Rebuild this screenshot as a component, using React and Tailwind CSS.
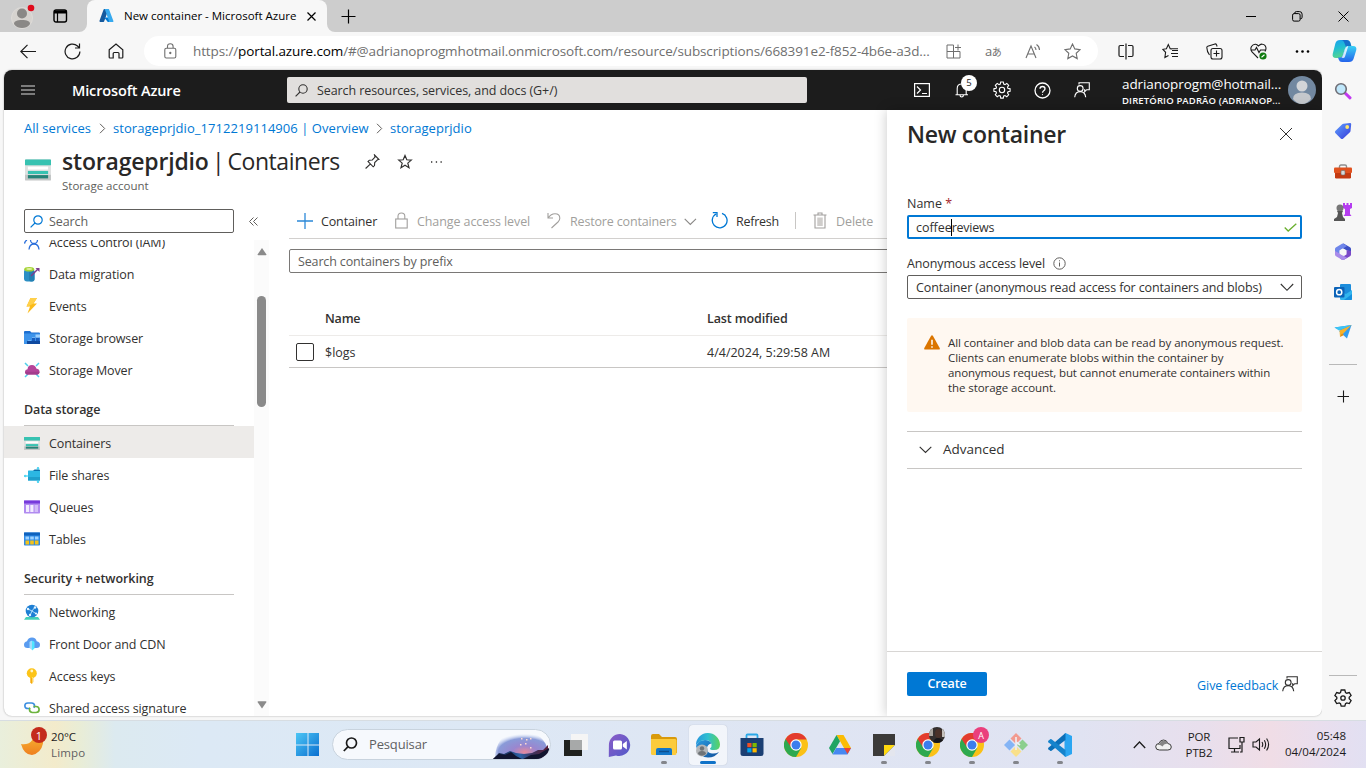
import React from "react";

/* Line icon: stroked with the current text colour. */
function Line({ w = 16, h = 16, sw = 1, vb, className = "", children }) {
  return (
    <svg width={w} height={h} viewBox={vb || `0 0 ${w} ${h}`} fill="none" stroke="currentColor" strokeWidth={sw} className={`shrink-0 ${className}`}>
      {children}
    </svg>
  );
}

/* Filled, multi-colour icon. */
function Art({ w = 16, h = 16, vb, className = "", children }) {
  return (
    <svg width={w} height={h} viewBox={vb || `0 0 ${w} ${h}`} className={`shrink-0 ${className}`}>
      {children}
    </svg>
  );
}

function Feedback({ className = "" }) {
  return (
    <Line w={16} h={16} sw={1.1} className={className}>
      <path d="M5 2.500V.7h10.300v7h-2.600l-2 2V7.700H10" />
      <circle cx="6.200" cy="6.500" r="2.900" />
      <path d="M.7 15.300c.3-3.400 2.400-5.700 5.500-5.700s5.200 2.300 5.500 5.700" />
    </Line>
  );
}

/* ---------- Browser chrome ---------- */

function TabStrip() {
  return (
    <div className="flex h-8 shrink-0 items-center bg-[#cdcdcd] text-black">
      <Art w={24} h={28} className="ml-[11px]">
        <circle cx="11" cy="16" r="10.500" fill="#d6d3cf" stroke="#dedbd8" />
        <circle cx="11" cy="11.500" r="5" fill="#8a8886" />
        <path d="M3 22c0-3 3-4 8-4s8 1 8 4c-2 3-5 4-8 4s-6-1-8-4z" fill="#8a8886" />
        <circle cx="20" cy="6" r="3.300" fill="#e00b1c" />
      </Art>
      <Line w={15} h={14} sw={1.4} className="ml-[18px]">
        <rect x="1" y="1" width="12.500" height="12" rx="2" />
        <path d="M1 3h12.500" strokeWidth="3" />
        <path d="M4.500 4v9" strokeWidth="1.200" />
      </Line>
      <Art w={8} h={8} className="ml-[11px] self-end"><path d="M0 8a8 8 0 0 0 8-8v8z" fill="#f7f7f7" /></Art>
      <div className="flex h-8 w-[240px] shrink-0 items-center rounded-t-lg bg-[#f7f7f7]">
        <Art w={16} h={16} className="ml-3">
          <path d="M5.300 1h4.300L5.200 13.300a.8.8 0 0 1-.8.600H1.200a.8.8 0 0 1-.7-1.100L4.600 1.600a.8.8 0 0 1 .7-.6z" fill="#155a9e" />
          <path d="M10.800 9.500H5.200l3.600 4.400h3.100z" fill="#0078d4" />
          <path d="M9.300 1H5.200a.8.8 0 0 1 .7.500l4.100 11.600a.8.8 0 0 1-.8.900h4.500a.8.8 0 0 0 .7-1.100L10.100 1.500a.8.8 0 0 0-.8-.5z" fill="#36a9ee" />
        </Art>
        <span className="ml-[9px] w-[180px] text-[11.5px] tracking-[0px]">New container - Microsoft Azure</span>
        <Line w={9} h={9} sw={1.2} className="ml-[3px]"><path d="M.5.5l8 8M8.500.5l-8 8" /></Line>
      </div>
      <Art w={8} h={8} className="self-end"><path d="M0 0a8 8 0 0 0 8 8H0z" fill="#f7f7f7" /></Art>
      <Line w={15} h={15} sw={1.2} className="ml-[6px]"><path d="M7.500.5v14M.5 7.500h14" /></Line>
      <Line w={10} h={10} className="ml-auto"><path d="M0 5.500h10" /></Line>
      <Line w={11} h={11} className="ml-9"><rect x=".6" y="2.600" width="7.500" height="7.500" rx="1.500" /><path d="M2.600 2.500Q2.600.6 4.500.6h3q2.600 0 2.600 2.600v3q0 1.700-1.800 1.700" /></Line>
      <Line w={11} h={11} className="ml-[35px] mr-[17px]"><path d="M.5.5l10 10M10.500.5l-10 10" /></Line>
    </div>
  );
}

function Toolbar() {
  return (
    <div className="flex h-[38px] shrink-0 items-center bg-[#f7f7f7] text-[#1b1b1b]">
      <Line w={17} h={15} sw={1.2} className="ml-5"><path d="M16 7.500H1M7.500.8L.8 7.500l6.700 6.700" /></Line>
      <Line w={17} h={17} sw={1.2} className="ml-[27px]"><path d="M15.900 8.500A7.400 7.400 0 1 1 13.500 3l2 2M15.500.5V5H11" /></Line>
      <Line w={16} h={16} sw={1.2} className="ml-[27px]"><path d="M1.200 6.700L8 1l6.800 5.700v7.500q0 .8-.8.800h-3v-4.500q0-1-1-1H6.200q-1 0-1 1V15H2q-.8 0-.8-.8z" /></Line>
      <div className="ml-5 flex h-[30px] w-[954px] shrink-0 items-center rounded-full bg-white text-[#6f6f6f]">
        <Line w={13} h={16} sw={1.1} className="ml-5"><rect x=".8" y="5.200" width="11" height="9.800" rx="1.500" /><path d="M3.500 5V3.500Q3.500.8 6.300.8T9.100 3.500V5" /><circle cx="6.300" cy="10" r=".6" fill="currentColor" /></Line>
        <span className="ml-4 w-[745px] shrink-0 whitespace-nowrap text-[13.5px] leading-5 tracking-[-0.12px]">
          https://<span className="text-black">portal.azure.com</span>/#@adrianoprogmhotmail.onmicrosoft.com/resource/subscriptions/668391e2-f852-4b6e-a3d...
        </span>
        <Line w={16} h={15} className="ml-[8px]"><path d="M7.500 1H1v13h13V7.500H1M7.500 1v13M12 .5v6M9 3.500h6" /></Line>
        <span className="ml-[23px] w-[20px] shrink-0 whitespace-nowrap font-['Open_Sans','Noto_Sans_CJK_JP',sans-serif] text-[13px] leading-5 tracking-[-0.5px]">a<span className="text-[10px]">あ</span></span>
        <Line w={17} h={16} sw={1.1} className="ml-[20px]"><path d="M1 15L6 3l5 12M2.700 11h6.600M9.500 4q1.500 1 1.500 3M11.500 1.500q3 2 3 5.500" /></Line>
        <Line w={17} h={17} sw={1.1} className="ml-[22px]"><path d="M8.500 1l2.300 4.900 5.300.7-3.900 3.700 1 5.300-4.700-2.600-4.700 2.600 1-5.300L.9 6.600l5.300-.7z" /></Line>
      </div>
      <Line w={16} h={17} sw={1.2} className="ml-[20px]"><path d="M6 2.500H2.200Q1 2.500 1 3.700v8.600q0 1.200 1.200 1.200H6M10 2.500h3.800q1.200 0 1.200 1.200v8.600q0 1.200-1.200 1.200H10M8 .5v16" /></Line>
      <Line w={17} h={16} sw={1.1} className="ml-[28px]"><path d="M10 6L8.200 5.700 6.300 1.500 4.400 5.700.8 6.300l2.800 3-.7 5.200 3.600-2.100M10 7.500h6M9 10.500h7M10 13.500h6M8.200 5.700h7.800" /></Line>
      <Line w={17} h={17} sw={1.1} className="ml-[27px]"><rect x="5" y="5.500" width="11" height="10.500" rx="2" /><path d="M10.500 7.500v6M7.500 10.500h6M3.500 12Q1 9 .8 4.500q0-1 .9-1.300L9 1q1-.3 1.500.7l.6 1.800" /></Line>
      <Line w={18} h={17} sw={1.1} className="ml-[27px]"><path d="M8 15L2 9Q0 6 1.500 3.500 3 1 5.500 1.200 7 1.400 8.500 3q2-2.300 4-1.800Q15.500 1.500 16 5q0 2-1 3.500M.5 7H5l1.500-2.500L9 9.500 10.500 7H16" /><circle cx="13" cy="13" r="3.600" fill="#107c10" stroke="none" /><path d="M11.500 14.200l3-2.400" stroke="#fff" /></Line>
      <Art w={15} h={5} className="ml-[27px]"><circle cx="2" cy="2.500" r="1.300" /><circle cx="7.500" cy="2.500" r="1.300" /><circle cx="13" cy="2.500" r="1.300" /></Art>
      <Art w={25} h={24} className="ml-[22px]">
        <defs>
          <linearGradient id="cp1" x1="0" y1="0" x2=".3" y2="1"><stop offset="0" stopColor="#1a9ff1" /><stop offset=".5" stopColor="#22bfd0" /><stop offset="1" stopColor="#58d68d" /></linearGradient>
          <linearGradient id="cp2" x1="0" y1="0" x2="0" y2="1"><stop offset="0" stopColor="#39d0f5" /><stop offset="1" stopColor="#2463eb" /></linearGradient>
        </defs>
        <path d="M8 1h7q2.500 0 3.300 2.500l1 3.500h-3q-2.500 0-3.300 2.500L11 16q-.8 3-3.500 3H4q-4 0-3.300-4L3.500 4Q4.500 1 8 1z" fill="url(#cp1)" />
        <path d="M17 23h-7q-2.500 0-3.300-2.500L6 18.500h1.500q2.700 0 3.500-3l2-6Q13.800 7 16.300 7H21q4 0 3.300 4L21.500 20q-1 3-4.500 3z" fill="url(#cp2)" />
        <path d="M9 1h6q2.500 0 3.300 2.500l1 3.500h-3q-1.500 0-2.300 1L12 3Q11.200 1 9 1z" fill="#1458c6" opacity=".75" />
        <path d="M9.500 18.500q1.200-.8 1.700-3l2-6Q14 7 16.300 7L13 17.500Q12.500 19 11 19z" fill="#fff" opacity=".8" />
      </Art>
    </div>
  );
}

function EdgeSidebar() {
  return (
    <div className="flex w-11 shrink-0 flex-col items-center bg-[#f7f7f7] pr-[2px] text-[#1b1b1b]">
      <Art w={18} h={18} className="mt-3"><path d="M10.500 10.500l5.500 5.300" stroke="#c239f0" strokeWidth="3" strokeLinecap="round" /><circle cx="7" cy="7" r="5.300" fill="#bfe7fb" stroke="#6e6e76" strokeWidth="1.600" /></Art>
      <Art w={18} h={18} className="mt-[22px]"><defs><linearGradient id="tg" x1="0" y1="0" x2="1" y2="1"><stop offset="0" stopColor="#5fa2ff" /><stop offset="1" stopColor="#3638d8" /></linearGradient></defs><path d="M9.500 1.800L16 1q1.300 0 1.200 1.200L16.500 9q-.1.700-.6 1.200L9 16.700q-1 .8-2 0L1.300 11q-.8-1 0-2L8 2.400q.6-.5 1.500-.6z" fill="url(#tg)" /><circle cx="13.200" cy="5" r="1.900" fill="#ffe66b" /></Art>
      <Art w={18} h={16} className="mt-[24px]"><path d="M5.500 4V2.500Q5.500 1 7 1h4q1.500 0 1.500 1.500V4" fill="none" stroke="#8d8d8d" strokeWidth="1.400" /><rect x="1" y="7" width="16" height="7.500" rx="1.200" fill="#c33a12" /><rect x="0" y="3.500" width="18" height="5.500" rx="1" fill="#e0511e" /><rect x="7" y="6.500" width="4" height="4.500" rx="1" fill="#d5d8da" stroke="#6b6b6b" strokeWidth=".6" /></Art>
      <Art w={20} h={20} className="mt-[22px]"><path d="M10 1h2v2h1.500V1h2v2H17V1h2v5l-2 1v5l1.500 2H10.500L12 12V7l-2-1z" fill="#b53cf0" /><circle cx="7" cy="6" r="3.500" fill="#777" /><path d="M4 9h6l-1 2 1 4 2 2v2H1v-2l3-2 1-4z" fill="#555" /></Art>
      <Art w={18} h={18} className="mt-[21px]">
        <path d="M9 .5q.5 0 1 .3l6 3.500q1 .6 1 1.700v3L12 7 9 5.500z" fill="#3c4fc4" />
        <path d="M9 .5L13 3 9 5.500 5.500 7.500v4L1.800 11Q1 10.500 1 10V6Q1 5 1.800 4.500L8 .8q.5-.3 1-.3z" fill="#6f86ea" />
        <path d="M17 8v3.500q0 1-1 1.700l-6 3.500q-1 .6-2 0l-2-1.200 6.500-4V7z" fill="#7a48c8" />
        <path d="M1 8v3.500q0 1 1 1.700l6 3.500q1 .5 2 0l3-2-4-2.200-3.500-2z" fill="#a98bea" />
        <path d="M9 5.500l3.200 1.800v3.500L9 12.600l-3.200-1.800V7.300z" fill="#f7f7f7" />
      </Art>
      <Art w={18} h={18} className="mt-[22px]"><rect x="6" y="1" width="11" height="12" rx="1" fill="#1c8ddc" /><path d="M6 8l6 3 6-4v9q0 1-1 1H7q-1 0-1-1z" fill="#32b5ee" /><path d="M10 17l8-6v5q0 1-1 1z" fill="#1490df" /><rect x="0" y="4" width="10.500" height="10.500" rx="1" fill="#0b63b8" /><circle cx="5.200" cy="9.200" r="2.600" fill="none" stroke="#fff" strokeWidth="1.500" /></Art>
      <Art w={18} h={16} className="mt-[23px]"><path d="M.5 3.500L17.500 1l-6 8z" fill="#2e95e8" /><path d="M17.500 1L13 14.500 5 7z" fill="#2f9cf1" /><path d="M17.500 1L5.500 6.500 6 13z" fill="#f6b12b" /><path d="M.5 3.500L17.500 1 5 6.500z" fill="#3cc5f5" /><path d="M6 13l2-3.500L10 11z" fill="#d88a14" /></Art>
      <div className="mt-[24px] h-px w-7 bg-[#b9b9b9]" />
      <Line w={12} h={13} sw={1.1} className="mt-[25px]"><path d="M6.500.5v12M.5 6.500h12" /></Line>
      <div className="mt-auto h-px w-7 bg-[#b9b9b9]" />
      <Line w={18} h={18} sw={1.3} className="mt-[13px] mb-[13px]"><path d="M7.200 1h3.600l.7 2.500 1.300.7 2.500-.7 1.800 3-1.900 1.800v1.500l1.900 1.800-1.800 3-2.500-.7-1.300.8-.7 2.400H7.200l-.7-2.400-1.300-.8-2.500.7-1.800-3 1.900-1.800V8.200L.9 6.500l1.800-3 2.500.7 1.300-.7z" /><circle cx="9" cy="9" r="2.200" /></Line>
    </div>
  );
}

/* ---------- Azure portal ---------- */

function PortalHeader() {
  return (
    <div className="flex h-10 shrink-0 items-center bg-[#1c1c1c] text-white">
      <Art w={14} h={10} className="ml-[17px]"><path d="M0 1h14M0 5h14M0 9h14" stroke="#9b9b9b" strokeWidth="1.500" /></Art>
      <span className="ml-[37px] w-[215px] shrink-0 pt-px text-[14.5px] font-semibold tracking-[-0.14px]">Microsoft Azure</span>
      <div className="flex h-[26px] w-[520px] shrink-0 items-center rounded-[2px] bg-[#e1dfdd] text-[#323130]">
        <Line w={13} h={13} sw={1.1} className="ml-2"><circle cx="8" cy="5" r="4.200" /><path d="M5 8L.6 12.400" /></Line>
        <span className="ml-[9px] pt-[2px] text-[12.5px] tracking-[-0.08px]">Search resources, services, and docs (G+/)</span>
      </div>
      <Line w={16} h={14} sw={1.2} className="ml-[107px]"><rect x=".6" y=".6" width="14.800" height="12.800" /><path d="M3 3.500L6.500 7 3 10.500M8 10.500h5" /></Line>
      <div className="relative ml-[25px] h-4 w-[14px] shrink-0">
        <Line w={14} h={16} sw={1.1}><path d="M.5 12.800h12.500M2.200 12.500V6.500q0-4.500 4.500-4.500t4.500 4.500v6M5 13q0 2 1.700 2t1.800-2" /></Line>
        <span className="absolute -top-[7px] left-[6px] flex h-4 w-4 items-center justify-center rounded-full bg-white text-[9.5px] leading-none text-[#222]">5</span>
      </div>
      <Line w={18} h={18} sw={1.1} className="ml-[24px]">
        <path d="M7.700 1h2.600l.4 2.100 1.300.5 1.800-1.200 1.900 1.900-1.200 1.800.5 1.300 2.100.4v2.500l-2.100.4-.5 1.300 1.200 1.800-1.900 1.900-1.800-1.200-1.300.5-.4 2.100H7.700L7.300 15 6 14.500l-1.800 1.200-1.900-1.900L3.500 12 3 10.700l-2.100-.4V7.800L3 7.400l.5-1.300-1.200-1.800 1.900-1.900L6 3.600l1.300-.5z" />
        <circle cx="9" cy="9" r="2.700" />
      </Line>
      <Line w={17} h={17} sw={1.3} className="ml-[23px]"><circle cx="8.500" cy="8.500" r="7.500" /><path d="M6 6.800Q6 4.500 8.500 4.500t2.500 2.200q0 1.200-1.300 2-1.200.8-1.200 2" /><circle cx="8.500" cy="12.600" r=".6" fill="#fff" stroke="none" /></Line>
      <Feedback className="ml-[23px]" />
      <div className="ml-8 flex w-[160px] shrink-0 flex-col whitespace-nowrap pt-[3px]">
        <span className="text-[13.5px] leading-[17px] tracking-[-0.08px]">adrianoprogm@hotmail...</span>
        <span className="text-[9.5px] font-semibold leading-[15px] tracking-[0.14px]">DIRETÓRIO PADRÃO (ADRIANOP...</span>
      </div>
      <Art w={28} h={28} className="ml-[6px]"><circle cx="14" cy="14" r="14" fill="#7288a0" /><circle cx="14" cy="10" r="5.500" fill="#d3d5d8" /><path d="M5 23q0-6.500 9-6.500t9 6.500q-4 5-9 5t-9-5z" fill="#c5c8cc" /></Art>
    </div>
  );
}

function ContainersArt({ w, h }) {
  return (
    <Art w={w} h={h} vb="0 0 27 22">
      <rect width="27" height="22" rx="1" fill="#c3c6c6" />
      <rect y="6" width="27" height="10" fill="#dfe1e1" />
      <rect width="27" height="6" rx=".5" fill="#37c2b1" />
      <rect x="3" y="7.500" width="21" height="3" fill="#fff" />
      <rect x="3" y="12" width="21" height="3.200" fill="#37c2b1" />
      <rect x="3" y="16.300" width="21" height="3.400" fill="#258277" />
    </Art>
  );
}

const ICONS = {
  iam: <Line sw={1.3} className="text-[#2a6fdb]"><circle cx="10" cy="6" r="3.500" /><path d="M5 15.500q.5-5.500 5-5.500t5 5.500M.5 9.500Q1 7 3 6" /></Line>,
  migration: <Art><rect x="0" y="3" width="10.500" height="12.500" rx="3" fill="#2b8fc4" /><rect x="5" y="4" width="5.500" height="11.500" rx="2" fill="#2380b3" /><ellipse cx="5.200" cy="3.200" rx="5" ry="2.300" fill="#a4d335" /><ellipse cx="5.200" cy="3" rx="3" ry="1" fill="#dff0a0" /><path d="M7 10l7-7" stroke="#7b3d8f" strokeWidth="1.500" /><path d="M11.500 2H15.500v4z" fill="#7b3d8f" /></Art>,
  events: <Art><path d="M6.500 0H13L9.500 5.500H13L3.500 15.500 6 8.500H2.500z" fill="#fbbc1c" /><path d="M6.500 0H13L9.500 5.500 4 8.500H2.500z" fill="#ffd04a" /></Art>,
  browser: <Art><path d="M0 2q0-1 1-1h5l1.500 1.500H15q1 0 1 1V14H0z" fill="#1d6fd0" /><rect y="3.500" width="16" height="10.500" fill="#3c93ea" /><path d="M4 10.500h3v3H4zM8 7.500h3v3H8zM11.500 4.500H16v3h-4.500z" fill="#9fd0fb" /><path d="M3 11h13v3H3z" fill="#0f4aa0" /><path d="M8 8h3v3H8zM12 8h3.500v3H12z" fill="#1a5dbd" /></Art>,
  mover: <Art><path d="M1 1l3 3M15 1l-3 3M1 15l3-3M15 15l-3-3" stroke="#4fcfea" strokeWidth="1.500" /><path d="M4 12.500Q1 12.500 1 9.700 1 7.500 3.500 7.200 4 3 8 3q3.500 0 4.300 3.500Q15.500 7 15.500 9.700q0 2.800-3 2.800z" fill="#b4459a" /><path d="M4 12.500Q1 12.500 1 9.700h14.500q0 2.800-3 2.800z" fill="#a33d8c" /></Art>,
  containers: <ContainersArt w={16} h={13} />,
  files: <Art><path d="M0 9h4M14 0v4M14 12v4" stroke="#6fe0f5" strokeWidth="1.300" /><circle cx="1.200" cy="9" r="1.300" fill="#55d6f2" /><rect x="4" y="3.500" width="12" height="10" rx=".6" fill="#2cb7e3" /><path d="M9 4l1.500-1.600H15q1 0 1 1V4z" fill="#0a6ea8" /><path d="M4 10h12v3.500H4z" fill="#1f9fcc" /><circle cx="14" cy="1.300" r="1.200" fill="#55d6f2" /><circle cx="14" cy="14.800" r="1.200" fill="#55d6f2" /></Art>,
  queues: <Art><rect y="1.500" width="16" height="13" rx=".8" fill="#b18bf0" /><rect y="1.500" width="16" height="3" fill="#773adc" /><path d="M2 6h3.200v7H2zM6.300 6h3.200v7H6.300z" fill="#f3ecff" /><path d="M10.600 6H14v7h-3.400z" fill="#d4bdf8" /></Art>,
  tables: <Art><rect y="1.500" width="16" height="13" rx=".8" fill="#2e8ae6" /><rect y="1.500" width="16" height="3" fill="#0f62bd" /><path d="M1.500 5.500h3.600v3H1.500zM6.200 5.500h3.600v3H6.200zM10.900 5.500h3.600v3h-3.600z" fill="#9fd3ff" /><path d="M1.500 9.500h3.600v4H1.500zM6.200 9.500h3.600v4H6.200zM10.900 9.500h3.600v4h-3.600z" fill="#f4c319" /></Art>,
  networking: <Art><path d="M2 13h12l2 2.700H0z" fill="#44d0b7" /><circle cx="8" cy="7" r="6.300" fill="#1e7fd4" /><path d="M4 5l4 2 3-4M8 7l-2 4.500M8 7l4.500 3" stroke="#bfe5ff" strokeWidth=".9" fill="none" /><circle cx="4" cy="5" r="1.200" fill="#e4f4ff" /><circle cx="11" cy="3.500" r="1.200" fill="#e4f4ff" /><circle cx="6" cy="11" r="1.200" fill="#e4f4ff" /><circle cx="12" cy="9.500" r="1.100" fill="#e4f4ff" /></Art>,
  cdn: <Art><path d="M3.500 12Q0 12 0 8.700 0 6 3 5.300 4 1.500 8 1.500t4.700 3.800Q16 6 16 8.700 16 12 12.500 12z" fill="#5a9cf0" /><path d="M5.500 6q2.500-2.500 5 0v6.500L8 14.500V5z" fill="#50e6ff" /><path d="M5.500 6Q7 4.700 8 4.700V14l-2.500-2z" fill="#a5dcfb" /></Art>,
  key: <Art><path d="M6.300 7h3v7l-1.500 2-1.500-1.500z" fill="#f5a90b" /><circle cx="7.800" cy="5.300" r="5" fill="#fcc419" /><circle cx="7.800" cy="3" r="1.400" fill="#fff3c9" /><path d="M8.500 9v6" stroke="#ffe27a" strokeWidth=".8" /></Art>,
  shared: <Line sw={1.7}><path d="M6 8.500H4Q.9 8.500.9 5.700T4 3h3.500q3 0 3 2.800 0 1.200-.7 2" stroke="#3b8ee0" /><path d="M9.500 6.500H12q3.100 0 3.100 3T12 12.500H8.500q-3 0-3-3 0-1 .6-1.700" stroke="#6cb33e" /></Line>,
};

function NavItem({ icon, label, active, lower }) {
  return (
    <div className={`flex h-8 shrink-0 items-center pl-5 ${active ? "bg-[#edebe9]" : ""} ${lower ? "pt-[2px]" : ""}`}>
      {ICONS[icon]}
      <span className={`ml-[9px] leading-[18px] tracking-[-0.13px] ${lower ? "pt-px" : "pt-[2px]"}`}>{label}</span>
    </div>
  );
}

function NavHeading({ tall, children }) {
  return (
    <div className={`ml-5 mr-5 flex shrink-0 items-end border-b border-[#c8c6c4] pb-[6px] text-[12.5px] font-semibold leading-[18px] tracking-[-0.08px] ${tall ? "h-[41px]" : "h-10"}`}>
      {children}
    </div>
  );
}

function SideNav() {
  return (
    <div className="flex w-[265px] shrink-0 flex-col">
      <div className="flex h-6 shrink-0 items-center">
        <div className="ml-5 flex h-6 w-[210px] items-center rounded-[2px] border border-[#605e5c]">
          <Line w={13} h={13} sw={1.2} className="ml-[5px] text-[#0078d4]"><circle cx="8" cy="5" r="4.200" /><path d="M5 8L.6 12.400" /></Line>
          <span className="ml-[6px] pt-[2px] tracking-[-0.1px] text-[#605e5c]">Search</span>
        </div>
        <Line w={9} h={9} className="ml-[15px] text-[#605e5c]"><path d="M4.500.5l-4 4 4 4M8.500.5l-4 4 4 4" /></Line>
      </div>
      <div className="mt-[7px] flex h-[476px]">
        <div className="flex w-[250px] flex-col overflow-hidden">
          <div className="-mt-[14px] flex flex-col">
            <NavItem icon="iam" label="Access Control (IAM)" />
            <NavItem icon="migration" label="Data migration" />
            <NavItem icon="events" label="Events" />
            <NavItem icon="browser" label="Storage browser" />
            <NavItem icon="mover" label="Storage Mover" />
            <NavHeading>Data storage</NavHeading>
            <NavItem icon="containers" label="Containers" active lower />
            <NavItem icon="files" label="File shares" lower />
            <NavItem icon="queues" label="Queues" lower />
            <NavItem icon="tables" label="Tables" lower />
            <NavHeading tall>Security + networking</NavHeading>
            <NavItem icon="networking" label="Networking" lower />
            <NavItem icon="cdn" label="Front Door and CDN" lower />
            <NavItem icon="key" label="Access keys" lower />
            <NavItem icon="shared" label="Shared access signature" lower />
          </div>
        </div>
        <div className="flex w-[15px] flex-col items-center bg-[#fbfbfb]">
          <Art w={10} h={8} className="mt-2"><path d="M5 0l4.500 6.500q0 .8-.8.800H1.300Q.5 7.300.5 6.500z" fill="#8a8a8a" /></Art>
          <div className="mt-10 h-[111px] w-[9px] rounded-full bg-[#8a8a8a]" />
          <Art w={10} h={8} className="mt-auto mb-[7px]"><path d="M5 7.500L.5 1q0-.8.8-.8h7.400q.8 0 .8.800z" fill="#8a8a8a" /></Art>
        </div>
      </div>
    </div>
  );
}

function Workspace() {
  return (
    <div className="flex min-w-0 flex-1 flex-col pl-5">
      <div className="-mt-[6px] flex h-[36px] shrink-0 items-center border-b border-[#d2d0ce] leading-[18px] text-[#a19f9d]">
        <Line w={16} h={16} sw={1.3} className="ml-2 text-[#2b88d8]"><path d="M8 0v16M0 8h16" /></Line>
        <span className="ml-2 w-[74px] shrink-0 pt-[3px] tracking-[-0.14px] text-[#323130]">Container</span>
        <Line w={13} h={17} sw={1.1}><rect x=".7" y="7" width="11.500" height="9" /><path d="M3 7V4.200Q3 1 6.400 1t3.400 3.200V7" /></Line>
        <span className="ml-[9px] w-[130px] shrink-0 whitespace-nowrap pt-[3px] tracking-[-0.09px]">Change access level</span>
        <Line w={14} h={17} sw={1.1}><path d="M1 1v5h5M1.200 5.800Q4 1.700 8 1.700q4.800 0 4.800 4.500 0 2-1.800 3.800L4.500 16" /></Line>
        <span className="ml-[9px] w-[114px] shrink-0 whitespace-nowrap pt-[3px] tracking-[-0.16px]">Restore containers</span>
        <Line w={13} h={8} sw={1.1} className="mt-[3px] text-[#8a8886]"><path d="M.7.8l5.600 5.700L12 .8" /></Line>
        <Line w={17} h={17} sw={1.3} className="ml-[14px] text-[#0078d4]"><path d="M11 1.400A7.400 7.400 0 1 1 5 2M1.800.7H6v4.200" /></Line>
        <span className="ml-2 w-[59px] shrink-0 pt-[3px] tracking-[-0.25px] text-[#323130]">Refresh</span>
        <div className="h-[17px] w-px bg-[#c8c6c4]" />
        <Line w={14} h={17} sw={1.1} className="ml-[17px]"><path d="M.5 3h13M5 2.800V1h4v1.800M2 3v13h10V3" /><path d="M7 5.500v8.500" strokeWidth="5.500" stroke="#cfcdcb" /></Line>
        <span className="ml-[9px] pt-[3px] tracking-[-0.1px]">Delete</span>
      </div>
      <div className="-mr-2 mt-[10px] flex h-6 shrink-0 items-center rounded-[2px] border border-[#7a7876] pl-2 pt-[2px] leading-[18px] tracking-[-0.14px] text-[#605e5c]">Search containers by prefix</div>
      <div className="mt-[30px] flex h-[33px] shrink-0 items-center border-b border-[#edebe9] pl-9 font-semibold">
        <span className="w-[382px] tracking-[-0.2px]">Name</span>
        <span className="tracking-[-0.12px]">Last modified</span>
      </div>
      <div className="flex h-8 shrink-0 items-center border-b border-[#c8c6c4] pl-[7px] leading-[18px]">
        <div className="h-[18px] w-[18px] rounded-[2px] border border-[#323130]" />
        <span className="ml-[11px] w-[382px] pt-[3px]">$logs</span>
        <span className="pt-[3px]">4/4/2024, 5:29:58 AM</span>
      </div>
    </div>
  );
}

function NewContainerPanel() {
  return (
    <div className="z-10 flex w-[435px] shrink-0 flex-col bg-white shadow-[0_0_12px_rgba(0,0,0,0.22)]">
      <div className="ml-5 mr-[29px] flex h-12 shrink-0 items-center justify-between">
        <h2 className="pb-px text-[23px] font-semibold leading-8 tracking-[-0.3px] text-[#292827]">New container</h2>
        <Line w={14} h={14} sw={1}><path d="M1 1l12 12M13 1L1 13" /></Line>
      </div>
      <div className="ml-5 mr-5 mt-[36px] flex flex-col">
        <label className="h-[21px] pt-px leading-[18px]">Name <span className="text-[#a4262c]">*</span></label>
        <div className="flex h-6 items-center rounded-[2px] border-2 border-[#0078d4] pl-[7px] leading-[18px]">
          <span className="pt-[2px] tracking-[-0.05px]">coffee</span>
          <span className="-ml-px h-[17px] w-px bg-black" />
          <span className="pt-[2px] tracking-[-0.25px]">reviews</span>
          <Line w={13} h={9} sw={1.3} className="ml-auto mr-[3px] text-[#6bb030]"><path d="M.7 4.500l3.500 3.500L12.300.7" /></Line>
        </div>
        <div className="mt-[15px] flex h-[21px] items-start">
          <span className="pt-px leading-[18px] tracking-[-0.12px]">Anonymous access level</span>
          <Line w={13} h={13} className="ml-2 mt-[3px] text-[#605e5c]"><circle cx="6.500" cy="6.500" r="5.700" /><path d="M6.500 5.500v4M6.500 3.300v1" /></Line>
        </div>
        <div className="flex h-6 items-center rounded-[2px] border border-[#605e5c] pl-2">
          <span className="pt-[2px] leading-[18px] tracking-[-0.13px]">Container (anonymous read access for containers and blobs)</span>
          <Line w={14} h={9} sw={1.1} className="ml-auto mr-[7px]"><path d="M.8 1l6.200 6.300L13.200 1" /></Line>
        </div>
        <div className="mt-[19px] flex h-[94px] rounded-[2px] bg-[#fff8f1]">
          <Art w={16} h={15} className="ml-[17px] mt-[17px]"><path d="M8 .3q.6 0 1 .7l6.700 12q.5 1.500-1 1.500H1.300q-1.500 0-1-1.500L7 1Q7.400.3 8 .3z" fill="#db7500" /><path d="M8 4.800v5M8 11.200v1.600" stroke="#fff" strokeWidth="1.500" /></Art>
          <p className="ml-2 mt-[17px] whitespace-nowrap text-[11.5px] leading-[15px] tracking-[-0.07px]">
            All container and blob data can be read by anonymous request.<br />
            Clients can enumerate blobs within the container by<br />
            <span className="tracking-[-0.13px]">anonymous request, but cannot enumerate containers within</span><br />
            the storage account.
          </p>
        </div>
        <div className="mt-[19px] flex h-[38px] items-center border-y border-[#c8c6c4] text-[13.5px] leading-5">
          <Line w={13} h={8} sw={1.1} className="ml-3"><path d="M.7.8l5.800 5.700L12.300.8" /></Line>
          <span className="ml-[11px] pb-[2px] tracking-[0px]">Advanced</span>
        </div>
      </div>
      <div className="mt-auto flex h-[65px] shrink-0 items-center border-t border-[#d8d6d4] pl-5">
        <button className="flex h-6 w-20 items-center justify-center rounded-[2px] bg-[#0078d4] font-semibold tracking-[-0.15px] text-white">Create</button>
        <span className="ml-[210px] mt-[5px] w-[85px] tracking-[-0.05px] text-[#0078d4]">Give feedback</span>
        <Feedback />
      </div>
    </div>
  );
}

function Crumb() {
  return <Line w={7} h={11} className="mx-[7px] text-[#605e5c]"><path d="M1 .8l4.700 4.700L1 10.200" /></Line>;
}

function Portal() {
  return (
    <div className="ml-1 flex h-[646px] w-[1318px] shrink-0 flex-col overflow-hidden rounded-lg bg-white shadow-[0_0_2px_rgba(0,0,0,0.35)]">
      <PortalHeader />
      <div className="flex min-h-0 flex-1">
        <div className="flex w-[883px] shrink-0 flex-col">
          <div className="flex h-9 shrink-0 items-center pl-5 text-[13px] leading-[18px] tracking-[0.05px] text-[#0078d4]">
            <span className="w-[68px] whitespace-nowrap pb-px">All services</span><Crumb />
            <span className="w-[256px] whitespace-nowrap pb-px">storageprjdio_1712219114906 | Overview</span><Crumb />
            <span className="pb-px">storageprjdio</span>
          </div>
          <div className="flex h-[63px] shrink-0 pl-[21px]">
            <div className="mt-[13px]"><ContainersArt w={26} h={22} /></div>
            <div className="ml-[11px] flex w-[303px] shrink-0 flex-col">
              <h1 className="h-[31px] whitespace-nowrap text-[23px] leading-[31px] tracking-[-0.42px] text-[#292827] [word-spacing:-2.3px]"><b className="font-semibold tracking-[-0.18px]">storageprjdio</b> | Containers</h1>
              <span className="h-[18px] text-[11.5px] leading-[18px] text-[#605e5c]">Storage account</span>
            </div>
            <Line w={15} h={15} sw={1.1} className="mt-[8px]"><path d="M9.500 1l4.500 4.500-1.500.3-2.800 2.800-.2 3-1.300 1.200L3 7.500l1.300-1.300 3-.2L10 3.200zM5.500 9.800L.6 14.500" /></Line>
            <Line w={16} h={16} sw={1.2} className="ml-[17px] mt-[8px]"><path d="M8 1.500l1.800 4.300 4.500.3-3.500 3 1.200 4.600L8 11.200l-4 2.500 1.200-4.600-3.500-3 4.500-.3z" /></Line>
            <Art w={13} h={4} className="ml-[17px] mt-[14px]"><path d="M1 2h1.300M5.800 2h1.300M10.500 2h1.300" stroke="#323130" strokeWidth="1.300" /></Art>
          </div>
          <div className="flex min-h-0 flex-1">
            <SideNav />
            <Workspace />
          </div>
        </div>
        <NewContainerPanel />
      </div>
    </div>
  );
}

/* ---------- Taskbar ---------- */

function Chrome() {
  return (
    <Art w={24} h={24}>
      <circle cx="12" cy="12" r="12" fill="#fbc116" />
      <path d="M12 12L1.600 6A12 12 0 0 0 12 24l5.200-9z" fill="#2da94f" />
      <path d="M12 6.500h10.700A12 12 0 0 0 1.600 6l5.600 8.500z" fill="#e33b2e" />
      <circle cx="12" cy="12" r="5.700" fill="#fff" /><circle cx="12" cy="12" r="4.500" fill="#3b7ded" />
    </Art>
  );
}

function Tile({ children, running, active }) {
  return (
    <div className="flex w-11 shrink-0 justify-center">
      <div className={`relative mt-1 flex h-10 w-[38px] items-center justify-center rounded ${active ? "bg-white/60 shadow-[0_0_1px_rgba(0,0,0,0.25)]" : ""}`}>
        {children}
        {running && <span className="absolute bottom-px h-[3px] w-[6px] rounded-full bg-[#83858b]" />}
        {active && <span className="absolute bottom-px h-[3px] w-4 rounded-full bg-[#0f72c8]" />}
      </div>
    </div>
  );
}

function Taskbar() {
  return (
    <div className="flex h-12 shrink-0 border-t border-[#d7dde2] bg-[linear-gradient(90deg,#e9efdc_0px,#f3ebcb_55px,#e9edd6_80px,#dceaf0_115px,#dce9f5_200px,#dde8f5_500px,#dfe5f3_800px,#e0e3f2_1080px,#e8dfed_1200px,#f0dde6_1270px,#e9deee_1320px,#e2e0f2_1366px)] text-[#1b1b1b]">
      <div className="relative ml-[21px] h-12 w-[26px] shrink-0">
        <Art w={26} h={34}><defs><linearGradient id="mo" x1="0" y1="0" x2="0" y2="1"><stop offset="0" stopColor="#f7b733" /><stop offset="1" stopColor="#ef7f1f" /></linearGradient></defs><path d="M0 23q7 1 10.500-3Q13 16.500 13 13h8.500q1.500 4 .5 9.500-2 9.500-11 11.500Q3 34 0 23z" fill="url(#mo)" /></Art>
        <span className="absolute left-[10px] top-[6px] flex h-4 w-4 items-center justify-center rounded-full bg-[#c42b1c] text-[11px] leading-none text-white">1</span>
      </div>
      <div className="ml-1 mt-2 flex w-[245px] shrink-0 flex-col text-[11.5px] leading-4 tracking-[-0.1px]">
        <span>20°C</span>
        <span className="tracking-[0.15px] text-[#5f6062]">Limpo</span>
      </div>
      <Art w={24} h={24} className="mt-3"><defs><linearGradient id="wn" x1="0" y1="0" x2="1" y2="1"><stop offset="0" stopColor="#4cc6f5" /><stop offset="1" stopColor="#0a6fd0" /></linearGradient></defs><path d="M0 0h11.500v11.500H0zM12.500 0H23v11.500H12.500zM0 12.500h11.500V23H0zM12.500 12.500H23V23H12.500z" fill="url(#wn)" /></Art>
      <div className="ml-[12px] mt-2 flex h-[31px] w-[219px] shrink-0 items-center overflow-hidden rounded-full border border-[#c8d3de] bg-[#f6f9fd]">
        <Line w={15} h={15} sw={1.7} className="ml-[10px]"><circle cx="8.500" cy="6" r="5" /><path d="M4.800 9.800L.8 14" /></Line>
        <span className="ml-[11px] w-[124px] shrink-0 text-[13px] tracking-[-0.15px] text-[#5f6062]">Pesquisar</span>
        <Art w={57} h={29}>
          <defs>
            <radialGradient id="sky" cx=".55" cy=".75" r=".65"><stop offset="0" stopColor="#e58a9c" /><stop offset=".35" stopColor="#9a86cf" /><stop offset=".75" stopColor="#7d90d4" stopOpacity=".9" /><stop offset="1" stopColor="#c9d6f3" stopOpacity="0" /></radialGradient>
            <linearGradient id="hill" x1="0" y1="0" x2="1" y2="0"><stop offset="0" stopColor="#10142f" /><stop offset=".5" stopColor="#2c62a5" /><stop offset=".7" stopColor="#3c3560" /><stop offset="1" stopColor="#5b1f38" /></linearGradient>
          </defs>
          <path d="M2 26Q5 1 28 1t28 22v6H2z" fill="url(#sky)" />
          <path d="M0 29l6-6 5 1 6-3 6 2 8 1 8-1 6-3 5 0 5-5v14z" fill="url(#hill)" />
          <path d="M0 29l6-5 6 1 6-3 5 4 6 3zM30 29l8-4 8-1 10-6v11z" fill="#11152f" />
          <path d="M28 8h1.500v1.500H28zM33 9h1.500v1.500H33zM37 8h1.500v1.500H37zM32 13h1.500v1.500H32zM37 17h1.500v1.500H37zM27 14h1.500v1.500H27z" fill="#ffd9d2" />
        </Art>
      </div>
      <div className="ml-[3px] flex">
        <Tile><Art w={24} h={24}><rect x="7" y="1" width="17" height="16" fill="#f5f5f5" /><rect y="7" width="18" height="16" fill="#20221f" /><rect x="6" y="7" width="12" height="10" fill="#a7a9a9" /></Art></Tile>
        <Tile><Art w={24} h={24}><defs><linearGradient id="ch" x1="0" y1="0" x2="1" y2="1"><stop offset="0" stopColor="#8b5cc7" /><stop offset="1" stopColor="#5059c9" /></linearGradient></defs><path d="M12 1a11 11 0 1 1-4 21.500L.8 24 .9 12A11 11 0 0 1 12 1z" fill="url(#ch)" /><rect x="5" y="7.500" width="9" height="9" rx="1.500" fill="#fff" /><path d="M14.800 11l4-3v8.500l-4-3z" fill="#fff" /></Art></Tile>
        <Tile running><Art w={26} h={24}><path d="M0 3q0-2 2-2h6l3 3h13q2 0 2 2v14H0z" fill="#d99a0b" /><path d="M0 6h24q1.500 0 1.500 1.500v13q0 1.500-1.500 1.500H1.500Q0 22 0 20.500z" fill="#fccb3c" /><path d="M5 22v-5q0-2 2-2h12q2 0 2 2v5z" fill="#1276c9" /><path d="M8 18.500h10" stroke="#0c4f90" strokeWidth="1.500" /></Art></Tile>
        <Tile active>
          <Art w={26} h={26} className="-mt-px">
            <defs>
              <linearGradient id="e1" x1="0" y1="0" x2="1" y2="0"><stop offset="0" stopColor="#2796dd" /><stop offset=".5" stopColor="#2fc0cf" /><stop offset="1" stopColor="#5bd35c" /></linearGradient>
              <linearGradient id="e2" x1="0" y1="0" x2="1" y2="1"><stop offset="0" stopColor="#2b9be0" /><stop offset="1" stopColor="#10509c" /></linearGradient>
            </defs>
            <path d="M1 14q2-6 9-6 5 0 6.500 3.500-4 .5-4.500 4.500 0 5 5 5.500 4 .3 7-1.500-4 5.500-11 5.500Q3.500 25 1 14z" fill="url(#e2)" />
            <path d="M1 13.500A12 12 0 0 1 25 12.500Q25 18 19 18q-4 0-4-1.500 2-1.500 1.500-4.500Q15 7.500 9.500 8 3 9 1 13.500z" fill="url(#e1)" />
            <circle cx="7" cy="18.500" r="6" fill="#b3b6b9" /><circle cx="7" cy="16.500" r="2.200" fill="#6f7377" /><path d="M3 22q0-3 4-3t4 3q-4 3.500-8 0z" fill="#6f7377" />
          </Art>
        </Tile>
        <Tile><Art w={24} h={24}><path d="M6.500 7V2.500Q6.500 1.500 7.500 1.500h9q1 0 1 1V7" fill="none" stroke="#2aa8e8" strokeWidth="1.800" /><path d="M.5 5h23v15.500q0 2.500-2.500 2.500H3Q.5 23 .5 20.500z" fill="#1b3f73" /><path d="M7.300 10h4.200v4.200H7.300z" fill="#f25022" /><path d="M12.500 10h4.200v4.200h-4.200z" fill="#7fba00" /><path d="M7.300 15.200h4.200v4.200H7.300z" fill="#00a4ef" /><path d="M12.500 15.200h4.200v4.200h-4.200z" fill="#ffb900" /></Art></Tile>
        <Tile><Chrome /></Tile>
        <Tile><Art w={22} h={20}><path d="M7.500 0h7l7.500 13h-7z" fill="#fbbc04" /><path d="M7.500 0L0 13l3.500 6L11 6.200z" fill="#1fa463" /><path d="M7.200 13H22l-3.500 6.500h-15z" fill="#4688f1" /><path d="M15 13h7l-3.500 6z" fill="#e94335" /></Art></Tile>
        <Tile running><Art w={22} h={22}><path d="M0 0h22v22H0z" fill="#3b3a39" /><path d="M11 11h11L11 22z" fill="#ffd90f" /><path d="M22 11v11H11z" fill="#e4e6ee" /></Art></Tile>
        <Tile running><Chrome /><span className="absolute left-[20px] top-[2px] flex h-4 w-4 overflow-hidden rounded-full bg-[#34302f]"><Art w={16} h={16}><path d="M0 0h4v9H0z" fill="#a9a49e" /><path d="M13 2h3v8h-3z" fill="#c6c2bd" /><ellipse cx="9.500" cy="6.500" rx="3.500" ry="4.500" fill="#4a322a" /><path d="M4 16q1-5 5-5t6 5z" fill="#17171a" /></Art></span></Tile>
        <Tile running><Chrome /><span className="absolute left-[20px] top-[2px] flex h-4 w-4 items-center justify-center rounded-full bg-[#ea3f7c] text-[9px] leading-none text-white">A</span></Tile>
        <Tile running><Art w={24} h={24}><path d="M12 0l5.500 5.500L12 11 6.500 5.500z" fill="#f29a8f" /><path d="M5.500 6.500L11 12l-5.500 5.500L0 12z" fill="#84b4f5" /><path d="M18.500 6.500L24 12l-5.500 5.500L13 12z" fill="#8bcf8e" /><path d="M12 13l5.500 5.500L12 24l-5.500-5.500z" fill="#f9e08a" /><path d="M12 4v13M12 9l4 3" stroke="#eef0f6" strokeWidth="1.600" /></Art></Tile>
        <Tile running><Art w={24} h={24}><path d="M17.500 0L24 3v18l-6.500 3-1-1V1z" fill="#2aa6f2" /><path d="M17.500 0v7L3.500 17.800q-.7.500-1.300 0L.4 16.200q-.7-.7 0-1.400z" fill="#0b6fb8" /><path d="M17.500 24v-7L3.500 6.200q-.7-.5-1.300 0L.4 7.800q-.7.700 0 1.400z" fill="#1583cc" /></Art></Tile>
      </div>
      <div className="ml-auto flex h-[47px] items-center">
        <Line w={13} h={8} sw={1.3}><path d="M.8 7l5.700-6L12.200 7" /></Line>
        <Art w={17} h={12} className="ml-[9px]"><path d="M4.500 11Q.7 11 .7 7.800T4 4.500Q5 1 8.500 1t4.300 3.500Q16.300 4.800 16.300 8t-3.500 3z" fill="#f1f1f1" stroke="#3b3b3b" /><path d="M2 6q1-1.500 2.500-1.200Q6 1.500 8.700 1.500q3 0 4 3.300Q9 4 7.500 7.500 5 5 2 6z" fill="#858585" /></Art>
        <div className="ml-[12px] flex w-[30px] flex-col items-center text-[11.5px] leading-4 tracking-[-0.1px]"><span>POR</span><span>PTB2</span></div>
        <Line w={17} h={17} sw={1.2} className="ml-[14px]"><path d="M10 2H1v10.500h11V9M6.500 12.500V16M3 16h8M14 6v10h-2M12 1.500h4V6h-4z" /></Line>
        <Line w={18} h={15} sw={1.1} className="ml-[7px]"><path d="M1 5h3l3.500-3v11L4 10H1zM10 5q1.500 2.500 0 5M12.300 3.300q2.700 4.200 0 8.400M14.600 1.500q4 6 0 12" /></Line>
        <div className="mb-[2px] ml-[8px] mr-5 flex w-[68px] flex-col items-end text-[11.5px] leading-4 tracking-[0px]"><span>05:48</span><span>04/04/2024</span></div>
      </div>
    </div>
  );
}

export default function App() {
  return (
    <div className="flex h-[768px] w-[1366px] flex-col overflow-hidden bg-[#f7f7f7] font-['Open_Sans','Noto_Sans',sans-serif] text-[12.5px] text-[#323130]">
      <TabStrip />
      <Toolbar />
      <div className="flex h-[650px] shrink-0">
        <Portal />
        <EdgeSidebar />
      </div>
      <Taskbar />
    </div>
  );
}
